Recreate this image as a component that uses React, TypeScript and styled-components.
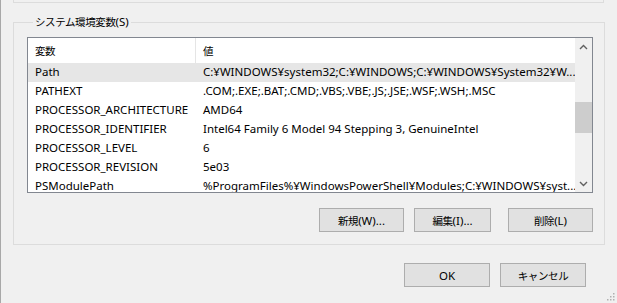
import React from "react";
import styled, { createGlobalStyle } from "styled-components";

const GlobalStyle = createGlobalStyle`
  html, body {
    margin: 0;
    padding: 0;
    background: #f0f0f0;
  }
  body {
    font-family: "Noto Sans", "Noto Sans CJK JP", sans-serif;
    font-size: 11.5px;
    color: #000;
  }
`;

const rows = [
  { name: "Path", value: "C:¥WINDOWS¥system32;C:¥WINDOWS;C:¥WINDOWS¥System32¥W...", selected: true },
  { name: "PATHEXT", value: ".COM;.EXE;.BAT;.CMD;.VBS;.VBE;.JS;.JSE;.WSF;.WSH;.MSC" },
  { name: "PROCESSOR_ARCHITECTURE", value: "AMD64" },
  { name: "PROCESSOR_IDENTIFIER", value: "Intel64 Family 6 Model 94 Stepping 3, GenuineIntel" },
  { name: "PROCESSOR_LEVEL", value: "6" },
  { name: "PROCESSOR_REVISION", value: "5e03" },
  { name: "PSModulePath", value: "%ProgramFiles%¥WindowsPowerShell¥Modules;C:¥WINDOWS¥syst..." },
];

const Window = styled.div`
  width: 617px;
  height: 303px;
  box-sizing: border-box;
  border-left: 1px solid #a8a8a8;
  padding: 0 12px 0 12px;
  position: relative;
  overflow: hidden;
`;

const TopGroup = styled.div`
  width: 591px;
  height: 3px;
  border: 1px solid #dcdcdc;
  border-top: none;
  box-sizing: border-box;
`;

const Group = styled.fieldset`
  width: 591px;
  height: 233px;
  box-sizing: border-box;
  margin: 9px 0 0 0;
  padding: 5px 11px 0 13px;
  border: 1px solid #dcdcdc;
  display: flex;
  flex-direction: column;
  align-items: flex-end;
`;

const Legend = styled.legend`
  padding: 0 2px;
  margin-left: 6px;
  line-height: 20px;
  color: #000;
`;

const Jp = styled.span`
  font-family: "Noto Sans CJK JP", sans-serif;
  font-size: 10.5px;
  letter-spacing: -0.4px;
`;

const ListBox = styled.div`
  width: 566px;
  height: 156px;
  box-sizing: border-box;
  border: 1px solid #828790;
  background: #fff;
  display: flex;
  overflow: hidden;
`;

const ListBody = styled.div`
  flex: 1;
  min-width: 0;
  display: flex;
  flex-direction: column;
`;

const Header = styled.div`
  height: 25px;
  flex-shrink: 0;
  display: grid;
  grid-template-columns: 168px minmax(0, 1fr);
`;

const HeaderCell = styled.div<{ $divider?: boolean }>`
  padding-left: 7px;
  display: flex;
  align-items: center;
  border-right: ${(p) => (p.$divider ? "1px solid #e5e5e5" : "none")};
`;

const Row = styled.div<{ $selected?: boolean }>`
  height: 19px;
  flex-shrink: 0;
  display: grid;
  grid-template-columns: 168px minmax(0, 1fr);
  background: ${(p) => (p.$selected ? "#e6e6e6" : "transparent")};
`;

const Cell = styled.div`
  padding-left: 7px;
  line-height: 18px;
  white-space: nowrap;
  overflow: hidden;
`;

const ScrollBar = styled.div`
  width: 17px;
  flex-shrink: 0;
  background: #f0f0f0;
  display: flex;
  flex-direction: column;
`;

const ScrollArrow = styled.div`
  height: 17px;
  display: flex;
  align-items: center;
  justify-content: center;
`;

const ScrollTrack = styled.div`
  flex: 1;
  padding-top: 47px;
`;

const Thumb = styled.div`
  height: 31px;
  background: #cdcdcd;
`;

const ButtonRow = styled.div<{ $gap: number; $top?: number }>`
  display: flex;
  gap: ${(p) => p.$gap}px;
  margin-top: ${(p) => p.$top ?? 0}px;
`;

const Button = styled.button<{ $w: number; $left?: number }>`
  width: ${(p) => p.$w}px;
  height: 24px;
  margin-left: ${(p) => p.$left ?? 0}px;
  box-sizing: border-box;
  border: 1px solid #adadad;
  background: #e1e1e1;
  font-family: "Noto Sans", "Noto Sans CJK JP", sans-serif;
  font-size: 11.5px;
  color: #000;
  padding: 0;
`;

const Footer = styled.div`
  display: flex;
  justify-content: flex-end;
  padding: 18px 18px 0 0;
  width: 591px;
  box-sizing: border-box;
`;

const Grip = styled.svg`
  position: absolute;
  right: 2px;
  bottom: 2px;
`;

const Chevron = ({ up }: { up?: boolean }) => (
  <svg width="9" height="6" viewBox="0 0 9 6">
    <path
      d={up ? "M1 5 L4.5 1.5 L8 5" : "M1 1 L4.5 4.5 L8 1"}
      fill="none"
      stroke="#606060"
      strokeWidth="1.4"
    />
  </svg>
);

export default function App() {
  return (
    <>
      <GlobalStyle />
      <Window>
        <TopGroup />
        <Group>
          <Legend>
            <Jp>システム環境変数</Jp>(S)
          </Legend>
          <ListBox>
            <ListBody>
              <Header>
                <HeaderCell $divider>
                  <Jp>変数</Jp>
                </HeaderCell>
                <HeaderCell>
                  <Jp>値</Jp>
                </HeaderCell>
              </Header>
              {rows.map((r) => (
                <Row key={r.name} $selected={r.selected}>
                  <Cell>{r.name}</Cell>
                  <Cell>{r.value}</Cell>
                </Row>
              ))}
            </ListBody>
            <ScrollBar>
              <ScrollArrow>
                <Chevron up />
              </ScrollArrow>
              <ScrollTrack>
                <Thumb />
              </ScrollTrack>
              <ScrollArrow>
                <Chevron />
              </ScrollArrow>
            </ScrollBar>
          </ListBox>
          <ButtonRow $gap={10} $top={15}>
            <Button $w={85}>
              <Jp>新規</Jp>(W)...
            </Button>
            <Button $w={77}>
              <Jp>編集</Jp>(I)...
            </Button>
            <Button $w={85} $left={7}>
              <Jp>削除</Jp>(L)
            </Button>
          </ButtonRow>
        </Group>
        <Footer>
          <ButtonRow $gap={10}>
            <Button $w={86}>OK</Button>
            <Button $w={86}>
              <Jp>キャンセル</Jp>
            </Button>
          </ButtonRow>
        </Footer>
        <Grip width="10" height="10" viewBox="0 0 10 10">
          {[
            [8, 2],
            [8, 5],
            [5, 5],
            [8, 8],
            [5, 8],
            [2, 8],
          ].map(([x, y]) => (
            <rect key={`${x}-${y}`} x={x} y={y} width="1.5" height="1.5" fill="#b0b0b0" />
          ))}
        </Grip>
      </Window>
    </>
  );
}
